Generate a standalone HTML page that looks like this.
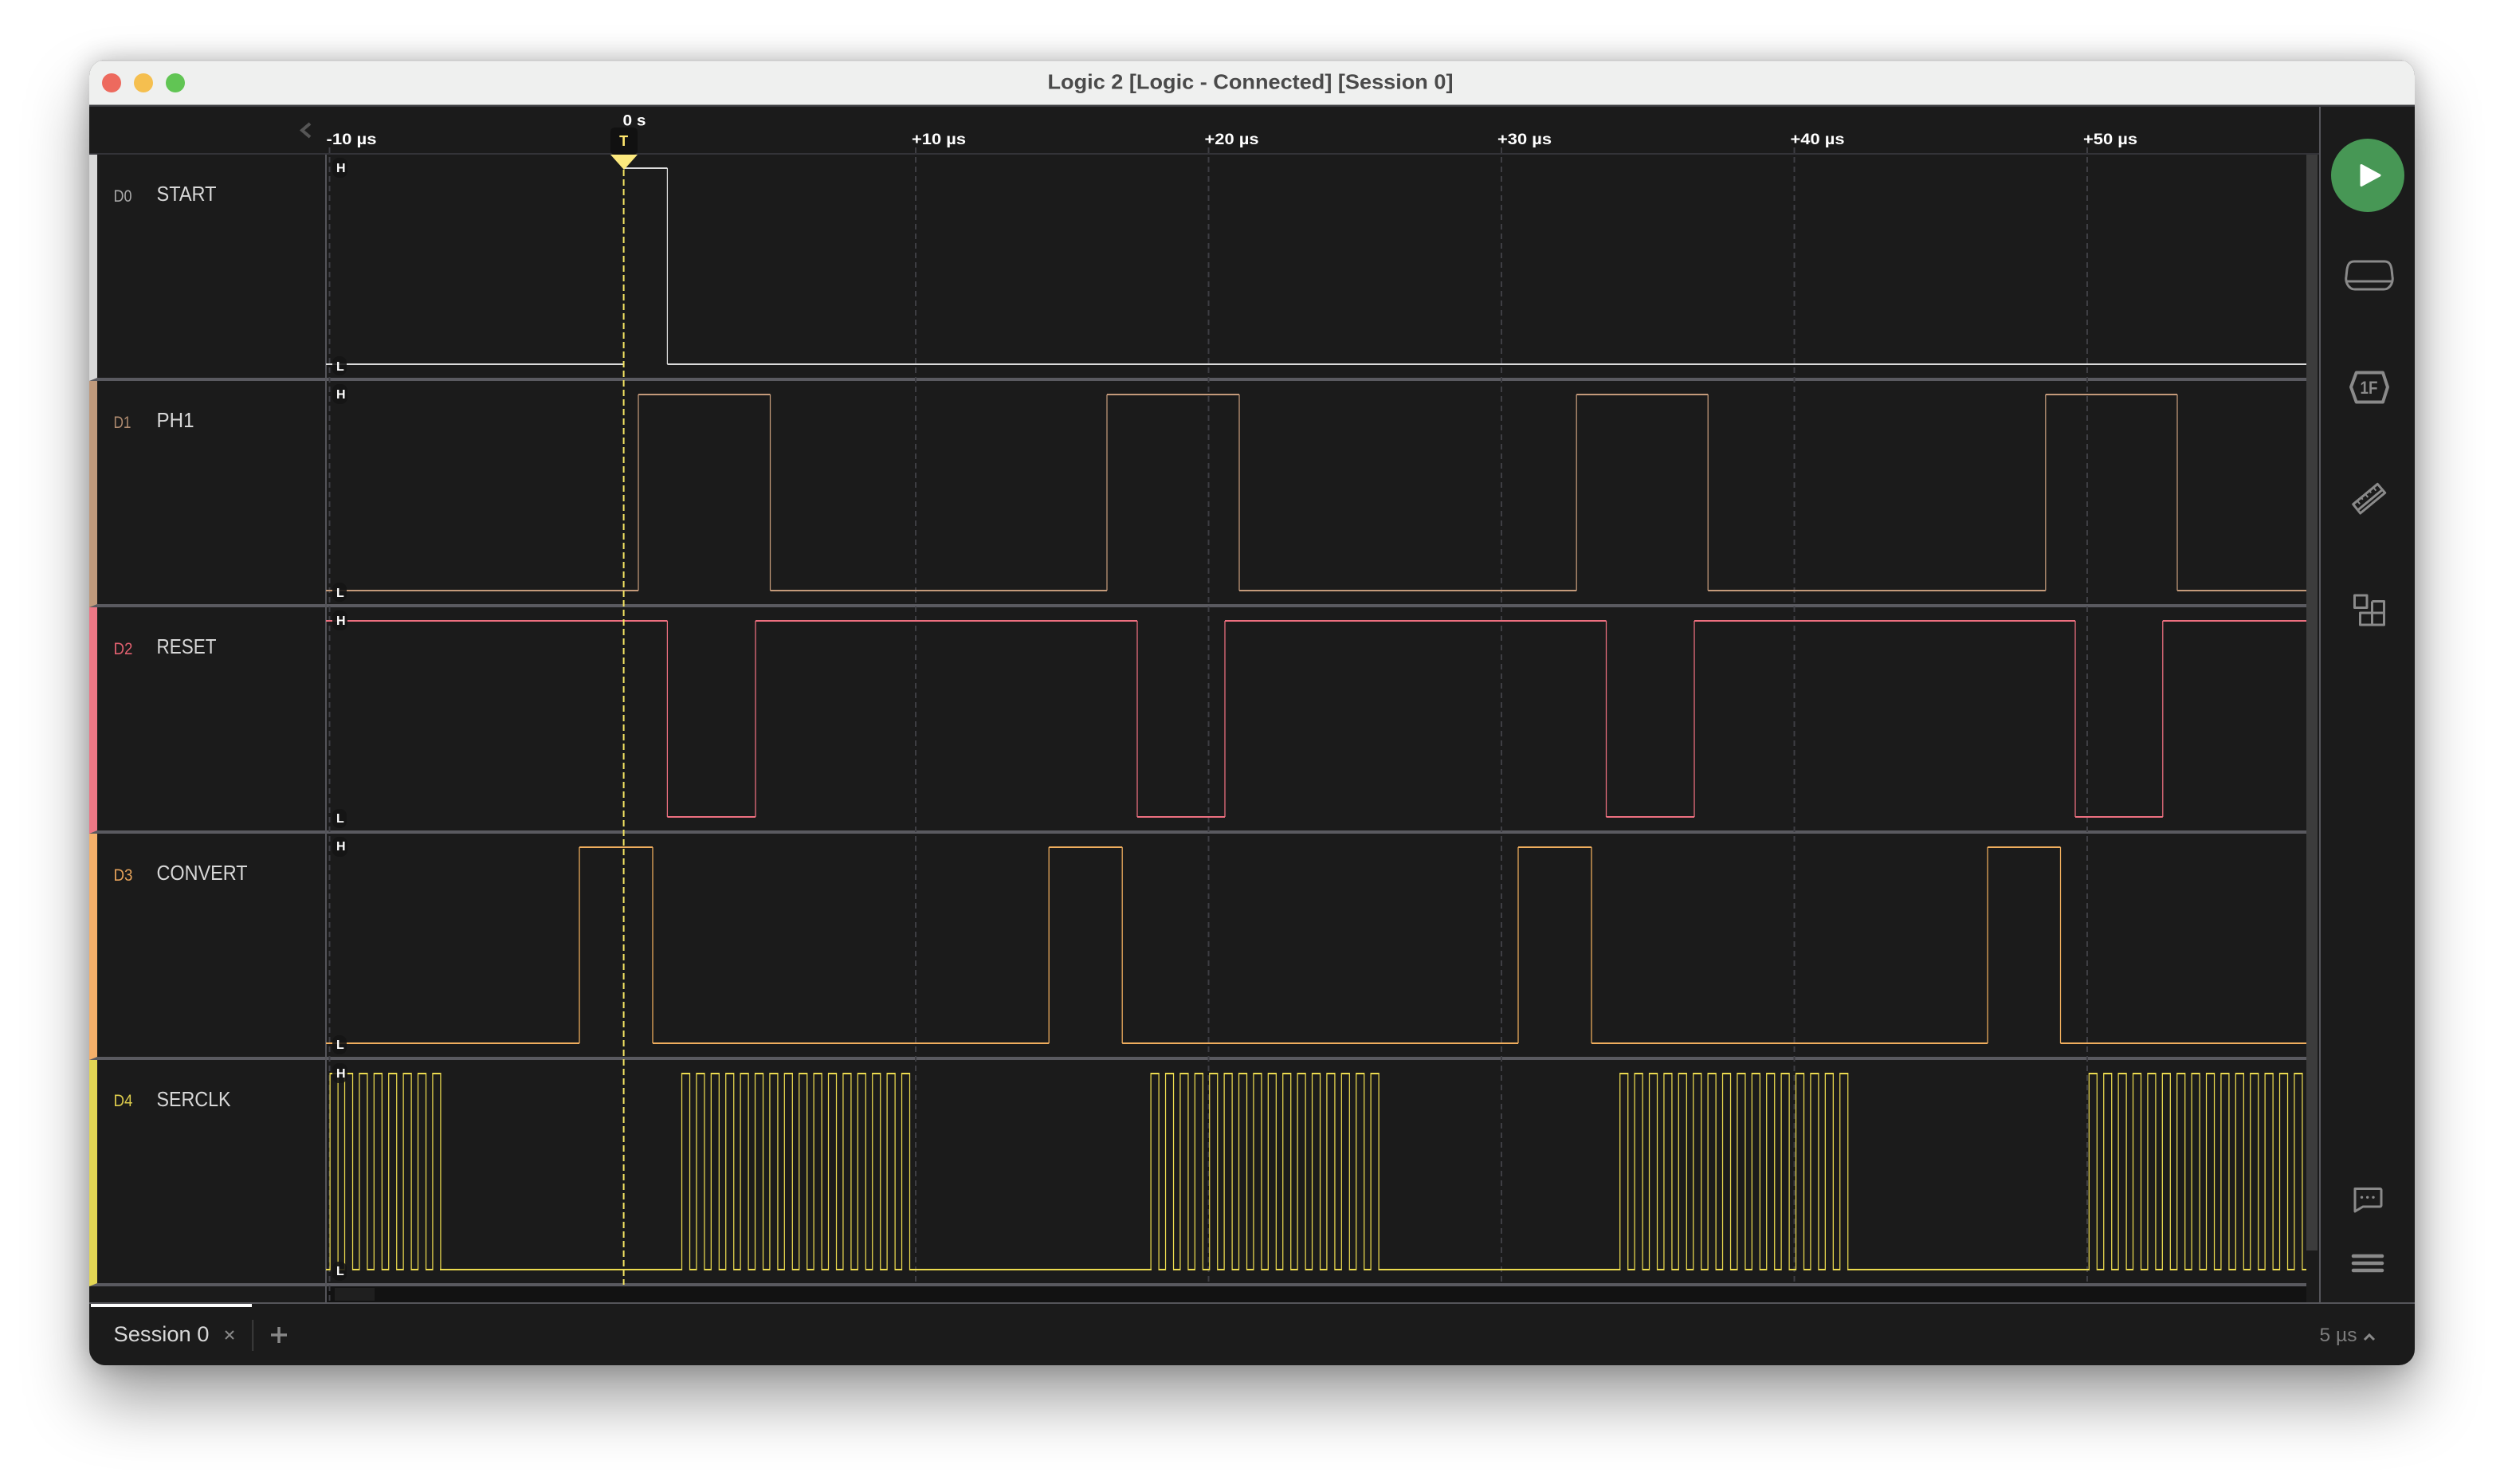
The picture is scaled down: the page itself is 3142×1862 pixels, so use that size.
<!DOCTYPE html>
<html><head><meta charset="utf-8"><title>Logic 2</title>
<style>
html,body{margin:0;padding:0;width:3142px;height:1862px;background:#fff;overflow:hidden}
#win{position:absolute;left:112px;top:75px;width:2918px;height:1638px;border-radius:20px;background:#1b1b1b;box-shadow:0 44px 80px rgba(0,0,0,.38),0 0 32px rgba(0,0,0,.24)}
svg{position:absolute;left:0;top:0}
text{font-family:"Liberation Sans",sans-serif}
.h{fill:none;stroke-width:2}
.v{fill:none;stroke-width:1.25}
.pill{fill:#141414;opacity:.88}
.hl{fill:#fff;font-size:16px;font-weight:bold}
.nm{fill:#d8d8d8;font-size:26px}
.dn{font-size:21px}
.tk{fill:#fff;font-size:19px;font-weight:bold}
.ic{fill:none;stroke:#8a8a8a;stroke-width:3;stroke-linejoin:round}
</style></head><body>
<div id="win"></div>
<svg width="3142" height="1862" viewBox="0 0 3142 1862" xmlns="http://www.w3.org/2000/svg">
<defs>
<clipPath id="wc"><rect x="112" y="75" width="2918" height="1638" rx="20"/></clipPath>
<clipPath id="sc"><rect x="409" y="1300" width="2485" height="310"/></clipPath>
<g id="b" stroke="#ecdb4f" fill="none">
<line x1="0" x2="286" y1="1347" y2="1347" stroke-width="2" stroke-dasharray="10 8.4"/>
<line x1="10" x2="276" y1="1593" y2="1593" stroke-width="2" stroke-dasharray="8.4 10"/>
<line x1="-.6" x2="287" y1="1470" y2="1470" stroke-width="248" stroke-dasharray="1.25 8.75 1.25 7.15"/>
</g>
</defs>
<g clip-path="url(#wc)">
<!-- title bar -->
<rect x="112" y="75" width="2918" height="57" fill="#eff0ef"/>
<rect x="112" y="75" width="2918" height="1.5" fill="#c8c8c8"/>
<rect x="112" y="131.5" width="2918" height="2.5" fill="#3a3a3e"/>
<circle cx="140" cy="104" r="12" fill="#ed6a5e"/>
<circle cx="180" cy="104" r="12" fill="#f5bf4f"/>
<circle cx="220" cy="104" r="12" fill="#61c554"/>
<text x="1314.500" y="111.5" font-size="26" font-weight="bold" fill="#4a4a4a" textLength="509" lengthAdjust="spacingAndGlyphs">Logic 2 [Logic - Connected] [Session 0]</text>

<!-- header -->
<rect x="112" y="192" width="2799" height="2" fill="#333338"/>
<path d="M389 155L379 163.500L389 172" fill="none" stroke="#555" stroke-width="4"/>

<!-- colour strips -->
<rect x="112" y="194" width="10" height="284" fill="#d8d8d8"/>
<rect x="112" y="478" width="10" height="284" fill="#c09a7c"/>
<rect x="112" y="762" width="10" height="284" fill="#ee7785"/>
<rect x="112" y="1046" width="10" height="284" fill="#f5b06a"/>
<rect x="112" y="1330" width="10" height="284" fill="#e3d654"/>

<!-- scroll areas -->
<rect x="2894" y="194" width="14" height="1375" fill="#3c3c3c"/>
<rect x="410" y="1614" width="2484" height="20" fill="#121212"/>
<rect x="420" y="1616" width="50" height="16" fill="#1f1f1f"/>

<!-- dividers -->
<g fill="#5a5a60">
<rect x="122" y="474" width="2772" height="4"/><path d="M112 478L122 474V478Z"/>
<rect x="122" y="758" width="2772" height="4"/><path d="M112 762L122 758V762Z"/>
<rect x="122" y="1042" width="2772" height="4"/><path d="M112 1046L122 1042V1046Z"/>
<rect x="122" y="1326" width="2772" height="4"/><path d="M112 1330L122 1326V1330Z"/>
<rect x="122" y="1610" width="2772" height="4"/><path d="M112 1614L122 1610V1614Z"/>
</g>
<rect x="408" y="194" width="2" height="1441" fill="#55555a"/>
<rect x="2910" y="134" width="2" height="1501" fill="#55555a"/>
<rect x="112" y="1634" width="2918" height="2" fill="#55555a"/>

<!-- grid -->
<g stroke="#3e3e43" stroke-width="2" stroke-dasharray="7 5">
<line x1="413.500" x2="413.500" y1="185" y2="1634"/>
<line x1="1149" x2="1149" y1="185" y2="1612"/>
<line x1="1516.500" x2="1516.500" y1="185" y2="1612"/>
<line x1="1884" x2="1884" y1="185" y2="1612"/>
<line x1="2251.500" x2="2251.500" y1="185" y2="1612"/>
<line x1="2619" x2="2619" y1="185" y2="1612"/>
</g>

<!-- D0 -->
<g stroke="#dcdcdc">
<path class="h" d="M409 457H783M783 211H837.400M837.400 457H2894"/>
<path class="v" d="M837.400 211V457"/>
</g>
<!-- D1 -->
<g stroke="#c49a7a">
<path class="h" d="M409 741H801M801 495H966.500M966.500 741H1389M1389 495H1555M1555 741H1978.200M1978.200 495H2143.200M2143.200 741H2566.800M2566.800 495H2732M2732 741H2894"/>
<path class="v" d="M801 495V741M966.500 495V741M1389 495V741M1555 495V741M1978.200 495V741M2143.200 495V741M2566.800 495V741M2732 495V741"/>
</g>
<!-- D2 -->
<g stroke="#ee7080">
<path class="h" d="M409 779H837.400M837.400 1025H948M948 779H1427M1427 1025H1537M1537 779H2015.500M2015.500 1025H2126M2126 779H2604M2604 1025H2713.800M2713.800 779H2894"/>
<path class="v" d="M837.400 779V1025M948 779V1025M1427 779V1025M1537 779V1025M2015.500 779V1025M2126 779V1025M2604 779V1025M2713.800 779V1025"/>
</g>
<!-- D3 -->
<g stroke="#f0ae5e">
<path class="h" d="M409 1309H727M727 1063H819M819 1309H1316.200M1316.200 1063H1408.200M1408.200 1309H1905M1905 1063H1997M1997 1309H2494M2494 1063H2585.500M2585.500 1309H2894"/>
<path class="v" d="M727 1063V1309M819 1063V1309M1316.200 1063V1309M1408.200 1063V1309M1905 1063V1309M1997 1063V1309M2494 1063V1309M2585.500 1063V1309"/>
</g>
<!-- D4 -->
<g clip-path="url(#sc)">
<use href="#b" x="266.900"/>
<use href="#b" x="855.500"/>
<use href="#b" x="1444.100"/>
<use href="#b" x="2032.700"/>
<use href="#b" x="2621.300"/>
<path class="h" stroke="#ecdb4f" d="M552 1593H856M1141 1593H1445M1729.600 1593H2033.500M2318 1593H2622"/>
</g>

<!-- H/L pills -->
<g>
<rect class="pill" x="417" y="198" width="19" height="25" rx="8"/><text class="hl" x="422" y="216">H</text>
<rect class="pill" x="417" y="447" width="18" height="24" rx="8"/><text class="hl" x="422" y="465">L</text>
<rect class="pill" x="417" y="482" width="19" height="25" rx="8"/><text class="hl" x="422" y="500">H</text>
<rect class="pill" x="417" y="731" width="18" height="24" rx="8"/><text class="hl" x="422" y="749">L</text>
<rect class="pill" x="417" y="766" width="19" height="25" rx="8"/><text class="hl" x="422" y="784">H</text>
<rect class="pill" x="417" y="1015" width="18" height="24" rx="8"/><text class="hl" x="422" y="1032">L</text>
<rect class="pill" x="417" y="1050" width="19" height="25" rx="8"/><text class="hl" x="422" y="1067">H</text>
<rect class="pill" x="417" y="1299" width="18" height="24" rx="8"/><text class="hl" x="422" y="1316">L</text>
<rect class="pill" x="417" y="1334" width="19" height="25" rx="8"/><text class="hl" x="422" y="1352">H</text>
<rect class="pill" x="417" y="1583" width="18" height="24" rx="8"/><text class="hl" x="422" y="1600">L</text>
</g>

<!-- row labels -->
<text class="dn" x="142.500" y="253" fill="#a8a8a8" textLength="23" lengthAdjust="spacingAndGlyphs">D0</text>
<text class="nm" x="196.500" y="252" textLength="75" lengthAdjust="spacingAndGlyphs">START</text>
<text class="dn" x="142.500" y="537" fill="#b08c70" textLength="22" lengthAdjust="spacingAndGlyphs">D1</text>
<text class="nm" x="196.500" y="536" textLength="47" lengthAdjust="spacingAndGlyphs">PH1</text>
<text class="dn" x="142.500" y="821" fill="#e0606f" textLength="24" lengthAdjust="spacingAndGlyphs">D2</text>
<text class="nm" x="196.500" y="820" textLength="75" lengthAdjust="spacingAndGlyphs">RESET</text>
<text class="dn" x="142.500" y="1105" fill="#e5a25a" textLength="24" lengthAdjust="spacingAndGlyphs">D3</text>
<text class="nm" x="196.500" y="1104" textLength="114" lengthAdjust="spacingAndGlyphs">CONVERT</text>
<text class="dn" x="142.500" y="1388" fill="#dccb4c" textLength="24" lengthAdjust="spacingAndGlyphs">D4</text>
<text class="nm" x="196.500" y="1388" textLength="93" lengthAdjust="spacingAndGlyphs">SERCLK</text>

<!-- ticks -->
<text class="tk" x="409.500" y="181" textLength="63" lengthAdjust="spacingAndGlyphs">-10 µs</text>
<text class="tk" x="1144" y="181" textLength="68" lengthAdjust="spacingAndGlyphs">+10 µs</text>
<text class="tk" x="1511.500" y="181" textLength="68" lengthAdjust="spacingAndGlyphs">+20 µs</text>
<text class="tk" x="1879" y="181" textLength="68" lengthAdjust="spacingAndGlyphs">+30 µs</text>
<text class="tk" x="2246.500" y="181" textLength="68" lengthAdjust="spacingAndGlyphs">+40 µs</text>
<text class="tk" x="2614" y="181" textLength="68" lengthAdjust="spacingAndGlyphs">+50 µs</text>
<text class="tk" x="781.500" y="157.500" textLength="29" lengthAdjust="spacingAndGlyphs">0 s</text>
<rect x="766" y="160" width="34" height="34" rx="5" fill="#111"/>
<text x="782.600" y="183" text-anchor="middle" font-size="18" font-weight="bold" fill="#ffe66d">T</text>

<!-- trigger -->
<line x1="782.600" x2="782.600" y1="213" y2="1612" stroke="#f5e663" stroke-width="2" stroke-dasharray="8 4"/>
<path d="M766 194H800L783 213Z" fill="#fce97e"/>

<!-- sidebar -->
<circle cx="2971" cy="220" r="46" fill="#479755"/>
<path d="M2963 207.500L2986 220L2963 232.500Z" fill="#fff" stroke="#fff" stroke-width="3" stroke-linejoin="round"/>
<path class="ic" d="M2954 328H2992C2998 328 3000 332 3001 338L3002 347C3003 352 3001 358 2997 361C2995 363 2993 363 2991 363H2955C2953 363 2951 363 2949 361C2945 358 2943 352 2944 347L2945 338C2946 332 2948 328 2954 328ZM2945 353H3001"/>
<path class="ic" style="stroke-width:4" d="M2956.700 467.500H2990L2996 485.700L2990 504.500H2956.700L2950 485.700Z"/>
<text x="2961.500" y="494" font-size="22" font-weight="bold" fill="#8a8a8a" textLength="22" lengthAdjust="spacingAndGlyphs">1F</text>
<path class="ic" d="M2983.300 607.300L2992.700 618.300L2961.700 644L2952.700 632.700ZM2958.600 640L2989.400 614.500"/>
<path fill="none" stroke="#8a8a8a" stroke-width="2" d="M2957.900 628.400l3.300 4M2962.800 624.300l2 2.500M2968 620l3.300 4M2973.200 615.700l2 2.500M2978.100 611.600l3.300 4"/>
<rect class="ic" x="2954.500" y="747" width="15.500" height="15.500"/>
<path class="ic" d="M2976.500 754.500H2991.500V784H2961.500V769H2991.500M2976.500 754.500V784"/>
<path class="ic" d="M2955 1491.500H2986.500A1.500 1.500 0 0 1 2988 1493V1512.500A1.500 1.500 0 0 1 2986.500 1514H2965L2955 1520Z"/>
<g fill="#8a8a8a"><circle cx="2963.500" cy="1502.300" r="1.700"/><circle cx="2970.700" cy="1502.300" r="1.700"/><circle cx="2978" cy="1502.300" r="1.700"/></g>
<g stroke="#8a8a8a" stroke-width="4.500" stroke-linecap="round"><line x1="2953" x2="2989" y1="1576" y2="1576"/><line x1="2953" x2="2989" y1="1585" y2="1585"/><line x1="2953" x2="2989" y1="1594" y2="1594"/></g>

<!-- tabs -->
<rect x="114" y="1636" width="202" height="4" fill="#fff"/>
<text x="142.500" y="1683" font-size="27" fill="#d8d8d8" textLength="120" lengthAdjust="spacingAndGlyphs">Session 0</text>
<path d="M283 1670L293 1680M293 1670L283 1680" stroke="#888" stroke-width="2" fill="none"/>
<rect x="316.500" y="1656" width="1.500" height="39" fill="#444"/>
<path d="M340 1675H360M350 1665V1685" stroke="#888" stroke-width="3.500" fill="none"/>
<text x="2910.500" y="1683" font-size="24" fill="#7d7d7d" textLength="47" lengthAdjust="spacingAndGlyphs">5 µs</text>
<path d="M2967 1681L2973 1675L2979 1681" stroke="#8a8a8a" stroke-width="3" fill="none"/>
</g>
</svg>
</body></html>
